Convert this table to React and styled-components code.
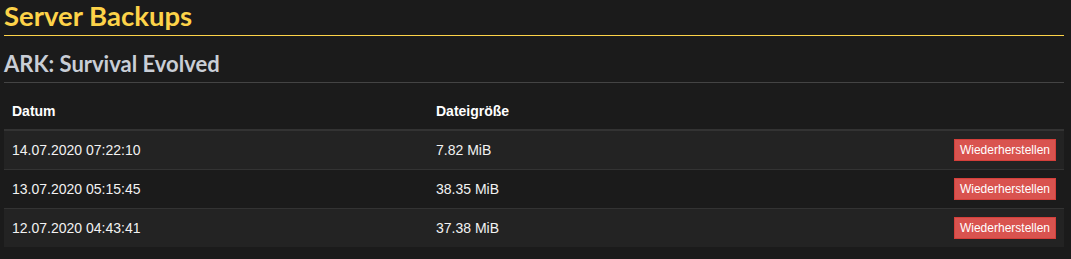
import React from 'react';
import styled, { createGlobalStyle } from 'styled-components';

const GlobalStyle = createGlobalStyle`
  html, body {
    margin: 0;
    padding: 0;
    background: #1b1b1b;
  }
  body {
    font-family: "Liberation Sans", Arial, sans-serif;
    font-size: 14px;
    color: #fff;
  }
`;

const Page = styled.div`
  padding: 0 7px 0 4px;
`;

const PageTitle = styled.h1`
  margin: 0;
  padding: 0 0 3px;
  font-family: Lato, sans-serif;
  font-weight: 700;
  font-size: 27.5px;
  line-height: 32px;
  color: #fdd349;
  border-bottom: 1px solid #fdd349;
`;

const GameTitle = styled.h3`
  margin: 13px 0 0;
  padding: 0 0 3px;
  font-family: Lato, sans-serif;
  font-weight: 700;
  font-size: 22px;
  line-height: 30px;
  color: #c9ced6;
  border-bottom: 1px solid #444;
`;

const Table = styled.table`
  width: 100%;
  margin-top: 10px;
  border-collapse: collapse;
  border-spacing: 0;
`;

const HeadCell = styled.th`
  text-align: left;
  font-weight: 700;
  padding: 8px;
  line-height: 20px;
  width: ${p => p.$width || 'auto'};
  border-bottom: 2px solid #333;
`;

const Row = styled.tr`
  background: ${p => (p.$striped ? '#232323' : 'transparent')};
`;

const Cell = styled.td`
  padding: 8px;
  line-height: 20px;
  vertical-align: middle;
  text-align: ${p => (p.$align === 'right' ? 'right' : 'left')};
  border-top: 1px solid #333;
  color: #f2f2f2;
`;

const RestoreButton = styled.button`
  font-family: "Liberation Sans", Arial, sans-serif;
  font-size: 12px;
  line-height: 18px;
  padding: 1px 5px;
  border: 1px solid #d43f3a;
  border-radius: 0;
  background: #d9534f;
  color: #fff;
  cursor: pointer;
`;

const backups = [
  { date: '14.07.2020 07:22:10', size: '7.82 MiB' },
  { date: '13.07.2020 05:15:45', size: '38.35 MiB' },
  { date: '12.07.2020 04:43:41', size: '37.38 MiB' }
];

export default function App() {
  return (
    <>
      <GlobalStyle />
      <Page>
        <PageTitle>Server Backups</PageTitle>
        <GameTitle>ARK: Survival Evolved</GameTitle>
        <Table>
          <thead>
            <tr>
              <HeadCell $width="40%">Datum</HeadCell>
              <HeadCell $width="40%">Dateigröße</HeadCell>
              <HeadCell />
            </tr>
          </thead>
          <tbody>
            {backups.map((b, i) => (
              <Row key={b.date} $striped={i % 2 === 0}>
                <Cell>{b.date}</Cell>
                <Cell>{b.size}</Cell>
                <Cell $align="right">
                  <RestoreButton>Wiederherstellen</RestoreButton>
                </Cell>
              </Row>
            ))}
          </tbody>
        </Table>
      </Page>
    </>
  );
}
